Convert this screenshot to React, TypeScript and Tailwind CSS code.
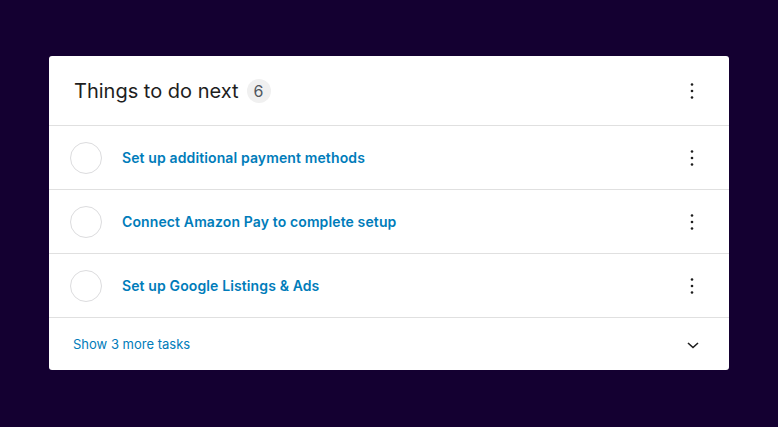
const tasks = [
  'Set up additional payment methods',
  'Connect Amazon Pay to complete setup',
  'Set up Google Listings & Ads',
];

function Kebab() {
  return (
    <svg width="24" height="24" viewBox="0 0 24 24" fill="#1e1e1e">
      <circle cx="12" cy="5.5" r="1.3" />
      <circle cx="12" cy="12" r="1.3" />
      <circle cx="12" cy="18.5" r="1.3" />
    </svg>
  );
}

export default function App() {
  return (
    <div className="w-[778px] h-[427px] bg-[#140031] pt-[56px] pl-[49px] font-['Inter',sans-serif]">
      <div className="w-[680px] bg-white rounded-[3px] overflow-hidden">
        {/* Header */}
        <div className="h-[70px] flex items-center pl-[25px] pr-[25px] border-b border-[#e0e0e0]">
          <h2 className="text-[20px] text-[#1e1e1e] leading-none">Things to do next</h2>
          <span className="ml-2 w-6 h-6 rounded-full bg-[#f0f0f0] text-[#50575e] text-[16px] flex items-center justify-center">6</span>
          <div className="ml-auto">
            <Kebab />
          </div>
        </div>

        {/* Tasks */}
        {tasks.map((t) => (
          <div key={t} className="h-16 flex items-center pl-[21px] pr-[25px] border-b border-[#e0e0e0]">
            <div className="w-8 h-8 rounded-full border border-[#dcdcde]" />
            <span className="ml-5 text-[14px] font-semibold tracking-[0.12px] text-[#007cba]">{t}</span>
            <div className="ml-auto">
              <Kebab />
            </div>
          </div>
        ))}

        {/* Footer */}
        <div className="h-[52px] flex items-center pl-6 pr-[28px] pt-[2px]">
          <span className="text-[13px] text-[#007cba]">Show 3 more tasks</span>
          <svg className="ml-auto" width="16" height="16" viewBox="0 0 16 16" fill="none" stroke="#1e1e1e" strokeWidth="1.6">
            <path d="M3 6 L8 10.5 L13 6" />
          </svg>
        </div>
      </div>
    </div>
  );
}
